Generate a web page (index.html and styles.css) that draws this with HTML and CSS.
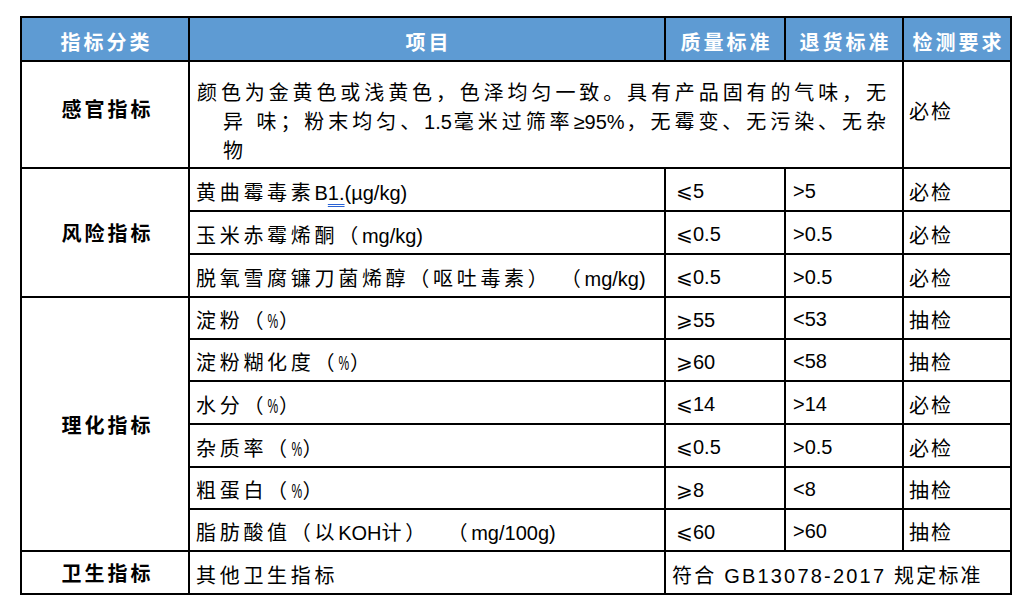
FILE: index.html
```html
<!DOCTYPE html>
<html lang="zh-CN">
<head>
<meta charset="utf-8">
<title>指标</title>
<link rel="stylesheet" href="styles.css">
</head>
<body>
<table class="spec">
  <colgroup>
    <col class="c1"><col class="c2"><col class="c3"><col class="c4"><col class="c5">
  </colgroup>
  <thead>
    <tr class="head">
      <th>指标分类</th>
      <th>项目</th>
      <th>质量标准</th>
      <th>退货标准</th>
      <th>检测要求</th>
    </tr>
  </thead>
  <tbody>
    <tr class="tall">
      <td class="cat cat-top">感官指标</td>
      <td class="desc" colspan="3">颜色为金黄色或浅黄色，色泽均匀一致。具有产品固有的气味，无<br>异&nbsp;味；粉末均匀、<span class="lt">1.5</span>毫米过筛率<span class="lt">≥95%</span>，无霉变、无污染、无杂<br>物</td>
      <td class="req cat-top">必检</td>
    </tr>
    <tr class="r">
      <td class="cat" rowspan="3">风险指标</td>
      <td class="item">黄曲霉毒素<span class="lt">B<span class="mark">1.</span>(µg/kg)</span></td>
      <td class="num q">⩽5</td>
      <td class="num b">&gt;5</td>
      <td class="req">必检</td>
    </tr>
    <tr class="r">
      <td class="item">玉米赤霉烯酮（<span class="lt">mg/kg)</span></td>
      <td class="num q">⩽0.5</td>
      <td class="num b">&gt;0.5</td>
      <td class="req">必检</td>
    </tr>
    <tr class="r">
      <td class="item">脱氧雪腐镰刀菌烯醇（呕吐毒素）&nbsp;（<span class="lt">mg/kg)</span></td>
      <td class="num q">⩽0.5</td>
      <td class="num b">&gt;0.5</td>
      <td class="req">必检</td>
    </tr>
    <tr class="s">
      <td class="cat" rowspan="6">理化指标</td>
      <td class="item">淀粉（<span class="pc">%</span>）</td>
      <td class="num q">⩾55</td>
      <td class="num b">&lt;53</td>
      <td class="req">抽检</td>
    </tr>
    <tr class="s">
      <td class="item">淀粉糊化度（<span class="pc">%</span>）</td>
      <td class="num q">⩾60</td>
      <td class="num b">&lt;58</td>
      <td class="req">抽检</td>
    </tr>
    <tr class="r">
      <td class="item">水分（<span class="pc">%</span>）</td>
      <td class="num q">⩽14</td>
      <td class="num b">&gt;14</td>
      <td class="req">必检</td>
    </tr>
    <tr class="r">
      <td class="item">杂质率（<span class="pc">%</span>）</td>
      <td class="num q">⩽0.5</td>
      <td class="num b">&gt;0.5</td>
      <td class="req">必检</td>
    </tr>
    <tr class="s">
      <td class="item">粗蛋白（<span class="pc">%</span>）</td>
      <td class="num q">⩾8</td>
      <td class="num b">&lt;8</td>
      <td class="req">抽检</td>
    </tr>
    <tr class="s">
      <td class="item">脂肪酸值（以<span class="lt">KOH</span>计）&nbsp;&nbsp;（<span class="lt">mg/100g)</span></td>
      <td class="num q">⩽60</td>
      <td class="num b">&gt;60</td>
      <td class="req">抽检</td>
    </tr>
    <tr class="r">
      <td class="cat">卫生指标</td>
      <td class="item">其他卫生指标</td>
      <td class="std" colspan="3">符合 GB13078-2017 规定标准</td>
    </tr>
  </tbody>
</table>
</body>
</html>
```

FILE: styles.css
```css
html, body {
  margin: 0;
  padding: 0;
  background: #ffffff;
}

body {
  padding: 16px 0 0 20px;
  font-family: "Liberation Sans", "Noto Sans CJK SC", sans-serif;
  font-size: 20px;
  color: #000000;
}

.spec {
  border-collapse: collapse;
  table-layout: fixed;
  width: 992px;
}

.c1 { width: 168px; }
.c2 { width: 476px; }
.c3 { width: 120px; }
.c4 { width: 118px; }
.c5 { width: 108px; }

.spec th,
.spec td {
  border: 2px solid #000000;
  padding: 0;
  white-space: nowrap;
  overflow: hidden;
}

.head { height: 44px; }
.tall { height: 107px; }
.r { height: 43px; }
.s { height: 42px; }

.spec .head th {
  background: #5e9bd3;
  color: #ffffff;
  font-weight: 700;
  font-size: 20px;
  letter-spacing: 3px;
  text-indent: 3px;
  text-align: center;
  vertical-align: middle;
  padding-top: 5px;
}

.spec .cat {
  font-weight: 700;
  text-align: center;
  letter-spacing: 3px;
  text-indent: 5px;
  vertical-align: middle;
}

.spec .cat-top {
  padding-bottom: 12px;
}

.spec .desc {
  white-space: normal;
  vertical-align: top;
  padding: 17px 14px 0 33px;
  text-indent: -26px;
  line-height: 29px;
  letter-spacing: 2px;
  text-align: justify;
  text-align-last: justify;
}

.spec .item {
  padding: 3px 0 0 6px;
  letter-spacing: 3.7px;
  vertical-align: middle;
}

.lt { letter-spacing: 0; }

.pc {
  letter-spacing: 0;
  display: inline-block;
  transform: scaleX(0.6);
  margin: 0 -3px;
}

.mark {
  text-decoration: underline double #2a62d4;
  text-underline-offset: 4px;
  text-decoration-thickness: 1px;
}

.spec .num {
  padding-top: 3px;
  vertical-align: middle;
  letter-spacing: 0;
}

.spec .num.q { padding-left: 10px; }
.spec .num.b { padding-left: 7px; }

.spec .req {
  padding: 3px 0 0 5px;
  letter-spacing: 2px;
  vertical-align: middle;
}

.spec .req.cat-top {
  padding-bottom: 12px;
}

.spec .std {
  padding: 3px 0 0 6px;
  letter-spacing: 2.2px;
  vertical-align: middle;
}
```
